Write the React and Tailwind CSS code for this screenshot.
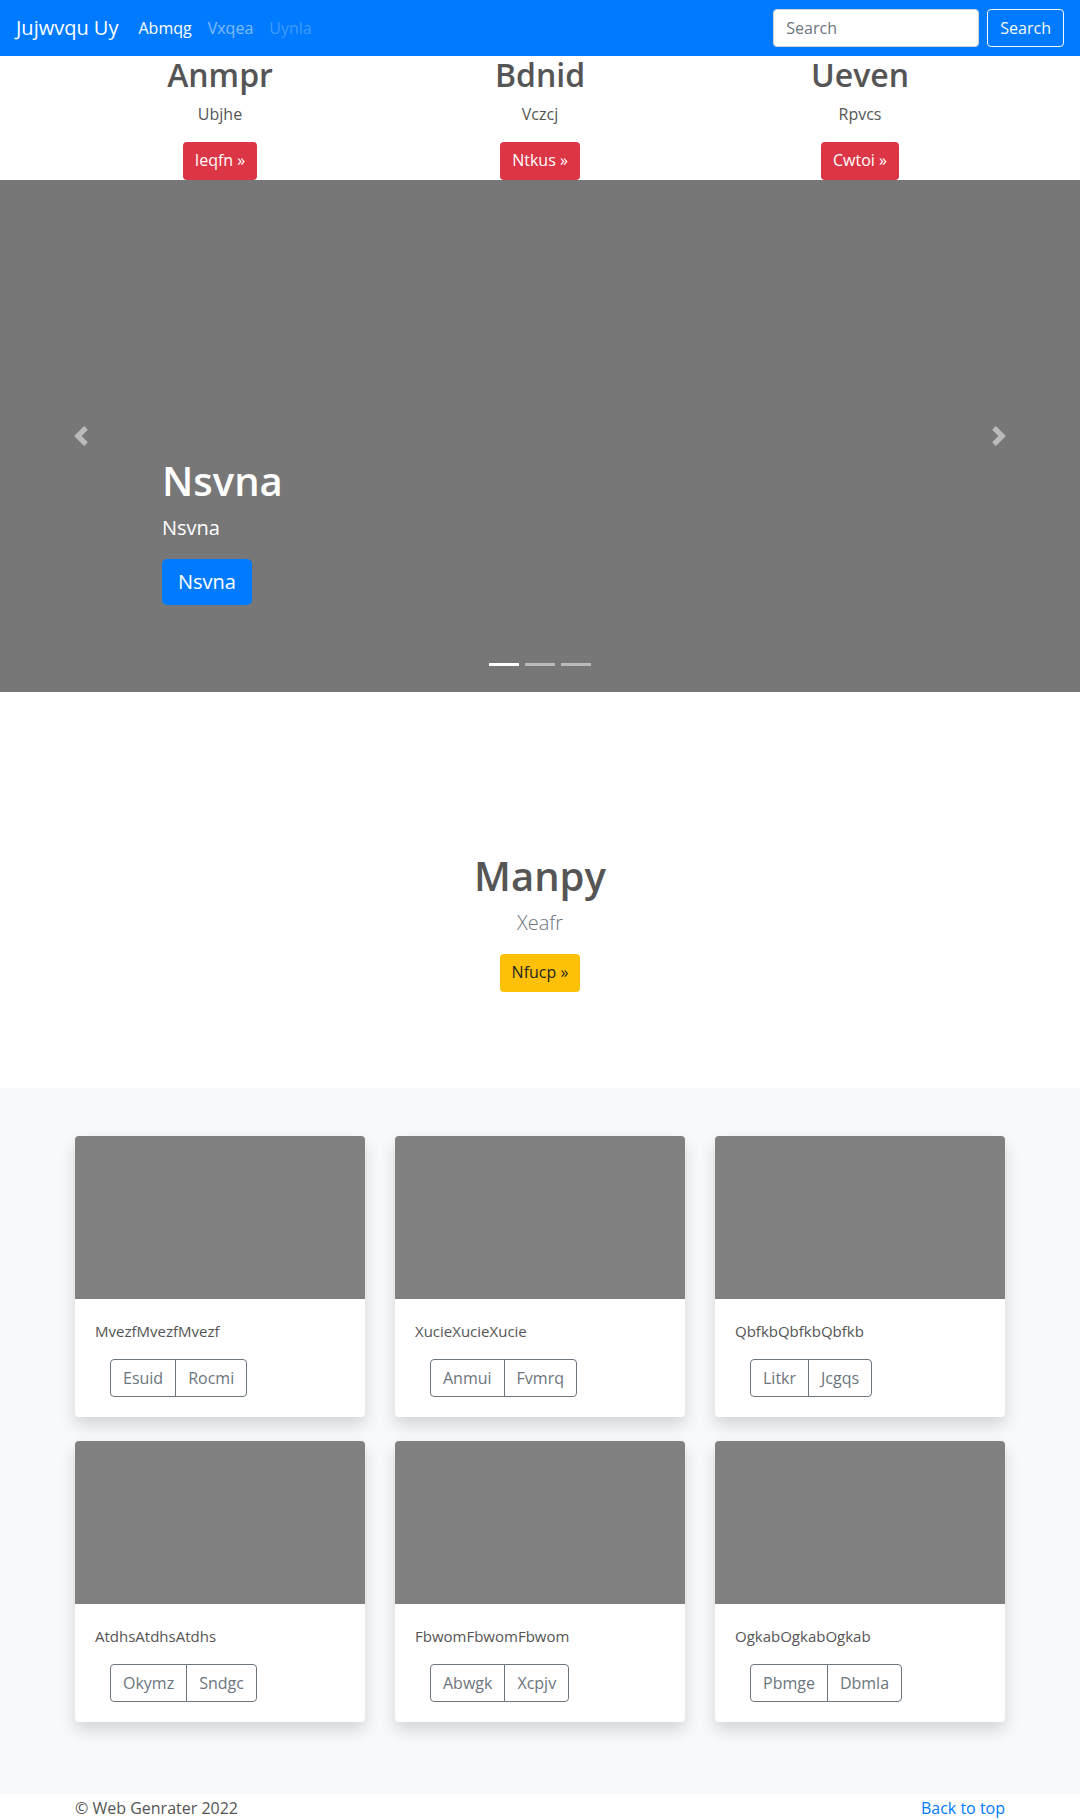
const features = [
    { title: "Anmpr", text: "Ubjhe", cta: "Ieqfn »" },
    { title: "Bdnid", text: "Vczcj", cta: "Ntkus »" },
    { title: "Ueven", text: "Rpvcs", cta: "Cwtoi »" },
];

const cards = [
    { text: "MvezfMvezfMvezf", a: "Esuid", b: "Rocmi" },
    { text: "XucieXucieXucie", a: "Anmui", b: "Fvmrq" },
    { text: "QbfkbQbfkbQbfkb", a: "Litkr", b: "Jcgqs" },
    { text: "AtdhsAtdhsAtdhs", a: "Okymz", b: "Sndgc" },
    { text: "FbwomFbwomFbwom", a: "Abwgk", b: "Xcpjv" },
    { text: "OgkabOgkabOgkab", a: "Pbmge", b: "Dbmla" },
];

function Chevron({ dir }) {
    const d =
        dir === "prev"
            ? "M5.25 0l-4 4 4 4 1.5-1.5L4.25 4l2.5-2.5L5.25 0z"
            : "M2.75 0l-1.5 1.5L3.75 4l-2.5 2.5L2.75 8l4-4-4-4z";
    return (
        <svg width="20" height="20" viewBox="0 0 8 8" fill="#fff">
            <path d={d} />
        </svg>
    );
}

export default function App() {
    return (
        <div className="font-['Open_Sans','Noto_Sans',sans-serif] text-base text-[#555] bg-white">
            {/* navbar */}
            <nav className="h-14 bg-[#007bff] flex items-center px-4">
                <a className="text-xl leading-[30px] text-white mr-3">Jujwvqu Uy</a>
                <ul className="flex">
                    <li><a className="block px-2 py-2 leading-6 text-white">Abmqg</a></li>
                    <li><a className="block px-2 py-2 leading-6 text-white/50">Vxqea</a></li>
                    <li><a className="block px-2 py-2 leading-6 text-white/25">Uynla</a></li>
                </ul>
                <form className="ml-auto flex items-center">
                    <input
                        type="text"
                        placeholder="Search"
                        className="w-[206px] h-[38px] px-3 bg-white border border-[#ced4da] rounded text-[#495057] placeholder:text-[#6c757d] mr-2 outline-none"
                    />
                    <button
                        type="button"
                        className="h-[38px] px-3 border border-[#f8f9fa] rounded text-[#f8f9fa] leading-6"
                    >
                        Search
                    </button>
                </form>
            </nav>

            {/* marketing */}
            <div className="w-[960px] mx-auto grid grid-cols-3">
                {features.map((f) => (
                    <div key={f.title} className="px-[15px] text-center">
                        <h2 className="text-[32px] font-semibold leading-[1.2] mb-2 text-[#555]">{f.title}</h2>
                        <p className="leading-6 mb-4">{f.text}</p>
                        <div className="flex justify-center">
                            <a className="h-[38px] px-3 py-1.5 leading-6 rounded bg-[#dc3545] text-white">
                                {f.cta}
                            </a>
                        </div>
                    </div>
                ))}
            </div>

            {/* carousel */}
            <div className="relative h-[512px] bg-[#777] mb-16">
                <div className="absolute left-0 top-0 bottom-0 w-[15%] flex items-center justify-center opacity-50">
                    <Chevron dir="prev" />
                </div>
                <div className="absolute right-0 top-0 bottom-0 w-[15%] flex items-center justify-center opacity-50">
                    <Chevron dir="next" />
                </div>
                <div className="absolute left-[15%] right-[15%] bottom-[67px] py-5 text-white">
                    <h1 className="text-[40px] font-semibold leading-[1.2] mb-2">Nsvna</h1>
                    <p className="text-xl leading-[30px] mb-4">Nsvna</p>
                    <p>
                        <a className="inline-block bg-[#007bff] text-white text-xl leading-[30px] px-4 py-2 rounded-[5px]">
                            Nsvna
                        </a>
                    </p>
                </div>
                <div className="absolute left-0 right-0 bottom-[26px] flex justify-center gap-[6px]">
                    <span className="w-[30px] h-[3px] bg-white" />
                    <span className="w-[30px] h-[3px] bg-white/50" />
                    <span className="w-[30px] h-[3px] bg-white/50" />
                </div>
            </div>

            {/* jumbotron */}
            <section className="py-24 text-center">
                <h1 className="text-[40px] font-semibold leading-[1.2] mb-2 text-[#555]">Manpy</h1>
                <p className="text-xl leading-[30px] font-light text-[#6c757d] mb-4">Xeafr</p>
                <a className="inline-block h-[38px] px-3 py-1.5 leading-6 rounded bg-[#ffc107] text-[#212529]">
                    Nfucp »
                </a>
            </section>

            {/* album */}
            <div className="bg-[#f8f9fa] py-12">
                <div className="w-[960px] mx-auto px-[15px] grid grid-cols-3 gap-x-[30px] gap-y-6 pb-6">
                    {cards.map((c) => (
                        <div key={c.text} className="bg-white rounded overflow-hidden shadow-[0_8px_16px_rgba(0,0,0,0.15)]">
                            <div className="h-[163px] bg-[#808080]" />
                            <div className="p-5">
                                <p className="leading-6 mb-4 text-[15px]">{c.text}</p>
                                <div className="inline-flex ml-[15px] text-[#6c757d]">
                                    <button className="h-[38px] px-3 leading-6 border border-[#6c757d] rounded-l">
                                        {c.a}
                                    </button>
                                    <button className="h-[38px] px-3 leading-6 border border-[#6c757d] rounded-r -ml-px">
                                        {c.b}
                                    </button>
                                </div>
                            </div>
                        </div>
                    ))}
                </div>
            </div>

            {/* footer */}
            <footer className="w-[960px] mx-auto px-[15px] pt-0.5 flex justify-between leading-6">
                <p>© Web Genrater 2022</p>
                <a className="text-[#007bff]">Back to top</a>
            </footer>
        </div>
    );
}
